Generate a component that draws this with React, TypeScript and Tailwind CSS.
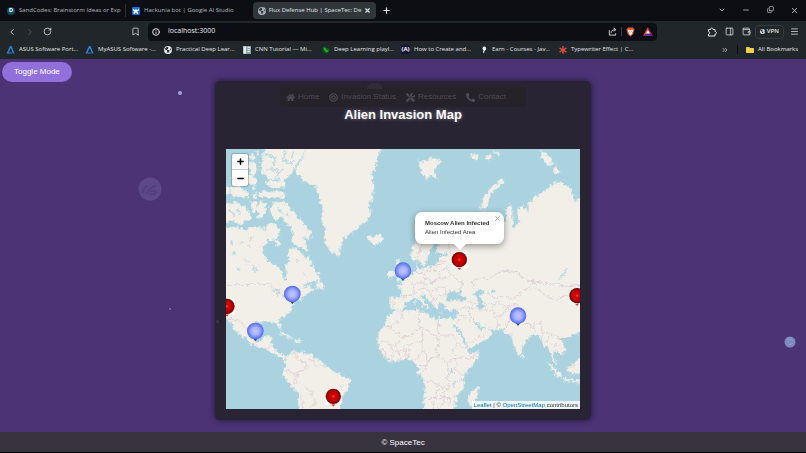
import { useState } from "react";
import { FaHome, FaBullseye, FaTools, FaPhone, FaAsterisk, FaFolder } from "react-icons/fa";
import { FaEarthAmericas } from "react-icons/fa6";
import {
  Bookmark,
  ChevronDown,
  ChevronLeft,
  ChevronRight,
  ChevronsRight,
  Copy,
  Info,
  Menu,
  Minus,
  PanelRight,
  Plus,
  RotateCw,
  Wallet,
  X,
} from "lucide-react";

const AsusIcon = () => (
  <svg viewBox="0 0 18 18" className="size-[9px] shrink-0">
    <path d="M1 17 8 2h3l6 15h-3L9.500 6 5 15h6l2 2z" fill="#2f86e0" />
  </svg>
);

const NotebookIcon = () => (
  <svg viewBox="0 0 16 16" className="size-[8px] shrink-0">
    <rect width="16" height="16" fill="#8fa3a8" />
    <path d="M1 1h5v14H1zM9 2h5v2H9zM9 6h5v2H9zM9 10h5v2H9z" fill="#e6eef0" />
  </svg>
);

const LeafIcon = () => (
  <svg viewBox="0 0 16 16" className="size-[8px] shrink-0">
    <path d="M1 3 6 1l4 3 5 2-1 6-5 3-5-2-3-5z" fill="#0d5a1a" />
    <path d="m2 3 5 1 2 4 4 1-3 4-4-3z" fill="#21b52f" />
  </svg>
);

const BracketIcon = () => (
  <span className="flex size-[9px] shrink-0 items-center justify-center bg-[#15133a] text-[6px] font-bold text-white">
    (A)
  </span>
);

const EarnIcon = () => (
  <svg viewBox="0 0 16 16" className="size-[8px] shrink-0">
    <path d="M8 1c4 0 5 3 4 6l-3 3-1 5-2-3 1-3-2-3c0-3 1-5 3-5z" fill="#e8f0ff" />
  </svg>
);

const ShareIcon = () => (
  <svg viewBox="0 0 20 20" className="size-[9px]" fill="none" stroke="currentColor" strokeWidth="2">
    <path d="M3 7v11h14v-4M7 13c0-5 3-7 10-7M13 2l4 4-4 4" />
  </svg>
);

const PuzzleIcon = () => (
  <svg viewBox="0 0 20 20" className="size-[10px]" fill="none" stroke="currentColor" strokeWidth="2">
    <path d="M3 5h4c0-4 5-4 5 0h4v4c4 0 4 5 0 5v4H3v-4c3 0 3-5 0-5z" />
  </svg>
);

const BraveIcon = () => (
  <svg viewBox="0 0 20 22" className="h-[10px] w-[9px]">
    <path d="m5 1 10 0 4 4-1 3-2 8-6 5-6-5-2-8-1-3z" fill="#f1562b" />
    <path d="m5 6 5 1 5-1 1 3-3 4 1 2-4 3-4-3 1-2-3-4z" fill="#fff" />
    <path d="m7 9 2 1v3zM13 9l-2 1v3z" fill="#f1562b" />
  </svg>
);

const TriangleIcon = () => (
  <svg viewBox="0 0 20 18" className="h-[9px] w-[10px]">
    <path d="M10 0 0 18l10-6z" fill="#ff4724" />
    <path d="M10 0l10 18-10-6z" fill="#9e1f63" />
    <path d="M0 18h20l-10-6z" fill="#662d91" />
    <path d="m10 6 4 7H6z" fill="#fff" />
  </svg>
);

const bookmarks = [
  { label: "ASUS Software Port...", icon: <AsusIcon /> },
  { label: "MyASUS Software -...", icon: <AsusIcon /> },
  { label: "Practical Deep Lear...", icon: <FaEarthAmericas className="size-[8px] shrink-0" /> },
  { label: "CNN Tutorial — Mi...", icon: <NotebookIcon /> },
  { label: "Deep Learning playl...", icon: <LeafIcon /> },
  { label: "How to Create and...", icon: <BracketIcon /> },
  { label: "Earn - Courses - Jav...", icon: <EarnIcon /> },
  { label: "Typewriter Effect | C...", icon: <FaAsterisk className="size-[8px] shrink-0 text-[#e8503f]" /> },
];

const navLinks = [
  { label: "Home", icon: <FaHome className="size-[9px]" /> },
  { label: "Invasion Status", icon: <FaBullseye className="size-[9px]" /> },
  { label: "Resources", icon: <FaTools className="size-[9px]" /> },
  { label: "Contact", icon: <FaPhone className="size-[9px] -scale-x-100" /> },
];

const safeZones = [
  [199, 435],
  [88, 546],
  [531, 365],
  [876, 500],
];

const infectedZones = [
  [3, 472],
  [700, 332],
  [1053, 440],
  [322, 742],
];

const BrowserBar = () => (
  <header className="bg-[#20262a] font-['Open_Sans',sans-serif] text-[6px] text-[#e3e7e9]">
    <div className="flex h-[21px] items-center bg-[#0d0e13]">
      <div className="flex h-[13px] w-[126px] items-center gap-1 border-r border-[#2a2d33] pl-[7px] text-[#b4b8bc]">
        <span className="flex size-[8px] shrink-0 items-center justify-center rounded-full bg-[#0f4d63] font-bold text-white">
          D
        </span>
        <span className="whitespace-nowrap">SandCodes: Brainstorm Ideas or Exp</span>
      </div>
      <div className="flex h-[13px] w-[127px] items-center gap-1 pl-1.5 text-[#b4b8bc]">
        <svg viewBox="0 0 16 16" className="size-[8px] shrink-0">
          <rect width="16" height="16" rx="2" fill="#1769e8" />
          <path d="m2 3 4 3 2-2 2 2 4-3-1 5-3 1 3 4-3 1-2-4-3 4-3-2 3-3-3-2z" fill="#fff" />
        </svg>
        <span className="whitespace-nowrap">Hackunia bot | Google AI Studio</span>
      </div>
      <div className="flex h-[17px] w-[123px] items-center justify-between rounded-[4px] bg-[#30373b] px-[5px]">
        <FaEarthAmericas className="size-[8px] shrink-0 text-[#a9b0b4]" />
        <span className="whitespace-nowrap">Flux Defense Hub | SpaceTec: De</span>
        <button aria-label="Close tab">
          <X className="size-[7px]" strokeWidth={4} />
        </button>
      </div>
      <button aria-label="New tab" className="ml-1.5">
        <Plus className="size-[9px]" strokeWidth={3} />
      </button>
      <div className="ml-auto flex">
        <button aria-label="Search tabs" className="flex w-6 justify-center">
          <ChevronDown className="size-[8px]" />
        </button>
        <button aria-label="Minimize" className="flex w-6 justify-center">
          <Minus className="size-[8px]" />
        </button>
        <button aria-label="Restore" className="flex w-6 justify-center">
          <Copy className="size-[7px] -scale-y-100" />
        </button>
        <button aria-label="Close" className="flex w-6 justify-center">
          <X className="size-[9px]" />
        </button>
      </div>
    </div>

    <div className="flex h-[21px] items-center">
      <div className="flex w-[148px] items-center gap-2 pr-2 pl-[7px]">
        <button aria-label="Back">
          <ChevronLeft className="size-[10px]" />
        </button>
        <button aria-label="Forward">
          <ChevronRight className="size-[10px] text-[#5b6166]" />
        </button>
        <button aria-label="Reload">
          <RotateCw className="size-[9px]" />
        </button>
        <button aria-label="Bookmark" className="ml-auto">
          <Bookmark className="size-[9px]" />
        </button>
      </div>
      <div className="flex h-[18px] flex-1 items-center gap-2 rounded-[4px] bg-[#0d0e13] px-1">
        <Info className="size-[8px]" strokeWidth={3} />
        <input
          aria-label="Address"
          defaultValue="localhost:3000"
          className="min-w-0 flex-1 bg-transparent text-[7px] text-[#e8eaec] outline-none"
        />
        <button aria-label="Share" className="border-r border-[#3b4045] pr-1">
          <ShareIcon />
        </button>
        <button aria-label="Shields" className="-ml-1">
          <BraveIcon />
        </button>
        <button aria-label="Rewards">
          <TriangleIcon />
        </button>
      </div>
      <div className="flex w-[149px] items-center justify-end gap-2 pr-[7px]">
        <button aria-label="Extensions">
          <PuzzleIcon />
        </button>
        <button aria-label="Sidebar">
          <PanelRight className="size-[9px]" />
        </button>
        <button aria-label="Wallet">
          <Wallet className="size-[9px]" />
        </button>
        <button className="-ml-1 flex h-[14px] items-center gap-0.5 rounded-[4px] border border-[#343a3f] px-1 font-semibold">
          <FaEarthAmericas className="size-[5px]" />
          VPN
        </button>
        <button aria-label="Menu" className="-ml-0.5">
          <Menu className="size-[9px]" />
        </button>
      </div>
    </div>

    <div className="flex h-[17px] items-center pr-2 pl-1.5 pb-0.5">
      {bookmarks.map((b) => (
        <a key={b.label} href="#" className="flex w-[79px] items-center gap-1 whitespace-nowrap">
          {b.icon}
          {b.label}
        </a>
      ))}
      <button aria-label="More bookmarks" className="ml-auto pr-2">
        <ChevronsRight className="size-[8px]" />
      </button>
      <a href="#" className="flex items-center gap-1 border-l border-[#0d0e13] pl-2 whitespace-nowrap">
        <FaFolder className="size-[8px] text-[#f4cf4d]" />
        All Bookmarks
      </a>
    </div>
  </header>
);

const WorldMap = () => (
  <svg viewBox="0 0 1062 780" preserveAspectRatio="xMidYMid slice" className="block size-full">
    <defs>
      <filter
        id="coast"
        x="0"
        y="0"
        width="1062"
        height="780"
        filterUnits="userSpaceOnUse"
        colorInterpolationFilters="sRGB"
      >
        <feTurbulence type="fractalNoise" baseFrequency="0.09" numOctaves="3" seed="4" />
        <feDisplacementMap in="SourceGraphic" scale="20" xChannelSelector="R" yChannelSelector="G" />
      </filter>
      <radialGradient id="safe">
        <stop offset="0" stopColor="#c3caff" />
        <stop offset="0.5" stopColor="#a3afff" />
        <stop offset="1" stopColor="#4f66ee" />
      </radialGradient>
      <radialGradient id="infected">
        <stop offset="0" stopColor="#ff4a4a" />
        <stop offset="0.2" stopColor="#d80808" />
        <stop offset="0.7" stopColor="#b50000" />
        <stop offset="1" stopColor="#6d0000" />
      </radialGradient>
    </defs>
    <rect width="1062" height="780" fill="#aad3df" />

    <g filter="url(#coast)">
      <rect x="-20" y="-20" width="1102" height="820" fill="#aad3df" />
      {/* Americas */}
      <g fill="#f2efe9">
        <path d="M-20 236 30 234 60 240 88 232 118 236 135 220 145 225 152 235 165 240 158 256 150 270 125 276 112 292 110 316 125 335 150 350 168 362 172 386 180 390 182 368 178 350 190 338 186 310 195 298 210 296 228 312 240 328 250 320 258 350 275 372 285 388 272 396 240 402 228 418 248 408 258 414 262 424 252 432 230 440 226 452 202 462 199 478 182 498 157 513 167 538 164 545 152 523 127 518 97 518 77 533 72 558 87 578 107 576 112 564 128 562 137 566 137 588 157 608 182 625 202 606 217 611 257 615 267 628 297 643 312 663 347 678 375 691 367 718 352 738 347 763 330 800 217 800 217 733 192 708 169 678 177 658 180 632 147 618 117 598 77 588 62 568 42 558 27 543 12 518 -20 490Z" />
        <path d="M242-20 232 23 207 63 212 78 230 80 222 92 240 100 267 108 282 148 292 188 285 213 297 238 295 273 307 298 322 313 337 321 345 298 352 268 377 253 397 233 427 213 435 193 429 168 442 138 445 108 437 78 452 48 457 18 478-20Z" />
        <path d="M427 262 433 256 438 266 447 260 465 257 471 274 447 289 430 280Z" />
        <path d="M270 403 282 388 284 398 295 408 292 422 270 418Z" />
        <path d="M155 555 172 552 192 562 205 571 190 568ZM203 575 222 572 232 577 208 580Z" />
        {/* Arctic islands */}
        <path d="M115-20 242-20 230 22 212 45 202 66 185 84 172 98 152 88 132 92 110 74 100 50 110 30Z" />
        <path d="M120 98 145 94 178 98 180 112 150 116 125 112ZM98 128 125 124 140 130 176 126 176 146 130 148 100 144Z" />
        <path d="M132 172 150 158 178 162 195 180 210 196 232 222 256 252 250 274 230 260 243 288 242 306 222 296 196 278 202 250 188 230 165 202 150 214 136 200Z" />
        <path d="M-20 153 14 166 26 158 45 170 60 172 70 192 76 212 56 218 44 230 20 216-20 222Z" />
        <path d="M-20 108 12 116 12 134-20 142ZM14 116 40 110 54 124 68 128 68 146 36 142 16 146ZM70 42 88 38 96 62 82 80 68 64ZM58 84 76 76 96 92 90 108 64 104ZM74 156 94 160 97 184 78 192ZM102 156 124 162 114 198 98 210 94 182ZM66 24 78 14 90 28 76 34ZM32 92 54 96 48 110 34 106ZM88 6 98 2 96 22ZM146 272 162 278 160 292 148 290ZM80 110 92 114 84 124ZM40 70 52 74 46 86ZM14 84 24 88 18 98ZM82 132 92 136 88 148 78 144Z" />
      </g>
      {/* Europe, Africa and Asia */}
      <g transform="translate(432 258)" fill="#f2efe9">
        <path d="M125 45 122 65 130 78 142 74 140 92 136 112 118 118 108 132 92 140 92 148 78 150 95 168 93 187 62 185 60 220 74 227 55 245 45 265 28 295 22 315 25 335 45 368 65 380 90 378 115 370 135 385 145 400 143 415 162 435 165 470 160 500 168 542 245 542 258 500 260 485 282 460 280 425 300 400 320 375 328 348 298 354 288 335 270 302 248 268 256 268 275 295 290 325 296 342 330 325 350 315 368 295 355 283 350 276 335 290 322 275 312 258 320 260 335 276 350 278 375 285 398 283 410 300 422 296 430 330 447 364 455 350 460 325 480 305 498 297 515 315 522 340 530 332 540 350 548 375 562 392 552 360 556 342 570 360 587 345 580 325 570 312 590 308 610 300 650 284 650-105 610-105 605-140 580-155 560-160 545-150 520-130 490-110 470-90 478-66 455-90 440-70 447-35 435-20 425-30 432-60 425-90 410-85 405-40 380-25 300-30 180-50 150-10Z" />
        <path d="M78 75 90 68 88 85 100 100 112 122 105 133 78 137 90 120 80 100ZM55 112 66 104 73 110 70 126 55 130ZM300 475 322 455 325 470 310 515 300 518 296 500ZM457 354 465 366 461 374 456 368ZM527 375 545 390 572 416 576 430 560 424ZM575 430 600 433 650 440 648 446 578 437ZM588 400 612 384 625 368 650 370 640 410 602 418Z" />
        <path d="M332-78 342-117 362-142 397-167 405-157 372-137 357-107 349-75ZM145-228 162-218 182-232 217-222 202-208 192-196 202-167 182-182 170-164 155-188ZM302-238 322-242 330-230 310-228ZM345-232 362-244 368-230 350-225ZM370-250 390-248 388-236ZM516-255 530-242 545-228 546-210 530-206 524-222 512-230ZM556-212 572-186 548-184Z" />
        <g fill="#aad3df">
          <path d="M72 227 98 223 108 203 124 196 142 188 150 200 168 212 172 224 178 220 172 206 158 192 150 180 158 176 172 194 188 208 196 225 208 226 205 210 216 202 222 212 225 225 245 228 262 226 258 250 240 250 215 247 205 256 180 245 172 235 150 228 148 222 100 227Z" />
          <path d="M228 190 236 172 250 168 258 174 270 168 276 172 268 178 290 190 285 200 255 194 232 200Z" />
          <path d="M312 172 330 164 342 172 330 184 342 202 340 222 326 222 324 202ZM363 166 374 164 372 178ZM240 403 251 400 248 411 240 410Z" />
          <path d="M196 15 206 25 198 45 202 56 236 54 236 60 210 64 206 78 194 90 175 98 150 102 142 98 143 76 148 74 158 94 168 88 170 70 180 58 184 38Z" />
        </g>
        <path d="M134 196 138 194 138 210 133 208ZM136 186 139 184 138 192ZM152 214 164 214 162 220ZM205 232 220 232 208 234ZM240 229 250 228 244 232Z" />
        <path d="M567 132 579 120 590 100M255 435 250 460M250 404 232 425" fill="none" stroke="#aad3df" strokeWidth="4" />
      </g>
      {/* Inland water and fjords */}
      <path
        d="M40 284 52 278M70 262 78 270M20 310 30 318M56 330 66 340M84 350 90 372M14 276 20 284M108 238 120 250M212 330 218 340M230 370 240 376M144 424 164 418M152 444 160 424M172 438 184 446M64 290 70 296M116 14 150 30 140 50M180 10 170 30 190 44 204 40M206 4 196 28M120 60 150 62 158 72M150 84 168 60M32 182 44 194M180 196 188 204M36 356 42 364M800 210 806 220M862 190 856 210M10 184 24 200M156 176 168 190"
        fill="none"
        stroke="#aad3df"
        strokeWidth="4"
      />
      {/* Borders */}
      <g fill="none" stroke="#cdb4c4" strokeWidth="2" opacity="0.75">
        <path d="M0 406H130L150 424 180 440 210 424 228 430M6 512 40 512 60 540 72 548M88 588 104 574M118 598 134 590M150 608 160 604M206 606 214 634 240 640 238 662 216 668 210 680 186 664 174 666M240 640 262 630 270 652 290 650 306 652M216 668 210 700 232 708 256 730 262 750 270 762 250 780M186 714 208 702M220 734 230 752 228 780M240 646 250 660" />
        <g transform="translate(432 258)">
          <path d="M140 70 152 40 165 0M205 20 210-20M240 58 235 30 245-10M136 112 160 112 165 130 150 142 130 148 112 134M165 112 195 105 205 108 208 130 190 140 165 130M130 148 130 165 142 175 120 180 96 188M150 142 170 150 190 142 205 152 200 166 178 168 165 158 145 165M205 78 225 80 232 100 208 108M232 100 250 128 278 142 276 156 262 166M208 130 240 125M205 152 225 160 232 175M200 166 210 182 232 182M178 168 186 190 206 190M186 190 192 204M196 92 215 88M62 196 72 198 70 220" />
          <path d="M312 160 306 140 330 128 360 134 375 118 405 106 440 110 458 130 490 140 478 158 455 170 440 185 420 190 400 182 375 190 350 172 342 178M490 140 520 145 560 148 600 155 630 150M490 140 500 160 530 185 560 192 600 178M342 205 370 210 385 200 400 214 420 212 440 206M370 210 372 245 385 262 378 282M372 245 400 240 412 218M412 218 430 230 408 270 410 284M440 206 445 250 470 268 500 270 512 262 520 290 515 315M470 268 488 276 498 290M530 320 545 300 560 306 580 316M545 330 560 330 575 340M530 290 545 300M260 226 275 222 300 215 310 220M285 190 300 200 318 205M300 215 295 235 312 256M262 240 275 240 295 252 312 262M258 262 275 250M296 325 318 312 340 304 345 290M318 222 340 226 360 226" />
          <path d="M92 232 98 250 62 275 48 275M62 275 62 282 100 308 75 330 60 330 46 318 28 318M146 228 145 260 150 280 125 300 100 308M205 256 205 300 250 300M150 280 160 280 200 305 205 320 198 345 205 365M160 280 155 320 135 325 110 328 100 345 75 350 65 340 60 330M155 320 160 345 145 365 130 375M250 300 262 322 285 340M262 322 248 345 255 368 290 370 310 368 325 350M205 365 230 382 255 368M205 365 175 375 160 345M175 375 170 395 150 420M150 392 170 395M162 435 185 438 200 450 215 455 238 465M230 382 235 400 230 420 238 445 232 465 220 475M255 368 262 390 255 402 278 420M255 440 282 435M215 455 195 478 200 490 165 490M195 478 190 522M200 490 225 485 240 490 260 485M225 485 215 510 205 522M240 490 235 515M45 368 50 348 30 342M65 380 68 352M90 378 88 350M105 372 104 345M115 370 118 335M585 402 605 398 620 385" />
        </g>
      </g>
    </g>

    {safeZones.map(([x, y]) => (
      <g key={`${x}-${y}`}>
        <path d={`M${x - 7} ${y + 22}h14l-7 9z`} fill="#284c78" />
        <circle cx={x} cy={y} r="25" fill="url(#safe)" />
      </g>
    ))}
    {infectedZones.map(([x, y]) => (
      <g key={`${x}-${y}`}>
        <path d={`M${x - 24} ${y + 4}h48v22h-48zM${x + 8} ${y - 24}h16v20h-16z`} fill="#fff" />
        <path d={`M${x - 6} ${y + 24}h12l-6 7z`} fill="#f03535" />
        <circle cx={x} cy={y} r="23" fill="url(#infected)" />
      </g>
    ))}
  </svg>
);

const Popup = ({ onClose }: { onClose: () => void }) => (
  <div className="absolute top-[63px] left-[189px] w-[89px] rounded-[7px] bg-white py-[7px] pl-2.5 text-[6px] leading-[9px] text-[#333] shadow-[0_2px_7px_rgba(0,0,0,0.4)]">
    <p className="font-bold whitespace-nowrap">Moscow Alien Infected</p>
    <p>Alien Infected Area</p>
    <button aria-label="Close popup" onClick={onClose} className="absolute top-[3px] right-[3px] flex text-[#9a9a9a]">
      <X className="size-[7px]" strokeWidth={3} />
    </button>
    <svg viewBox="0 0 12 6" className="absolute top-full left-[39px] h-[6px] w-[12px]">
      <path d="M0 0h12L6 6z" fill="#fff" />
    </svg>
  </div>
);

const Planets = () => (
  <div className="pointer-events-none absolute inset-0">
    <span className="absolute top-[32px] left-[178px] size-[4px] rounded-full bg-[#aaa2d6]" />
    <svg viewBox="0 0 24 24" className="absolute top-[118px] left-[138px] size-[24px]">
      <circle cx="12" cy="12" r="11.500" fill="#5d4988" />
      <path
        d="M5 16c0-4 2-7 5-7M9 17c1-4 3-7 9-8M12 14h6M12 17c3 1 5 0 7-2"
        fill="none"
        stroke="#553f81"
        strokeWidth="2"
      />
    </svg>
    <span className="absolute top-[249px] left-[169px] size-[2px] rounded-full bg-[#8475b0]" />
    <svg viewBox="0 0 12 12" className="absolute top-[277px] right-[10px] size-[12px]">
      <circle cx="6" cy="6" r="5.500" fill="#8089bd" />
      <path d="M3 4c2-2 5-1 6 1M4 8c2 1 4 0 5-1" fill="none" stroke="#949fcb" />
    </svg>
  </div>
);

const App = () => {
  const [dark, setDark] = useState(true);
  const [popupOpen, setPopupOpen] = useState(true);

  return (
    <div className="flex min-h-screen flex-col bg-black font-['Liberation_Sans',Arial,sans-serif]">
      <BrowserBar />

      <main
        className={`relative grid flex-1 grid-cols-[1fr_376px_1fr] items-start pt-[3px] pb-3 ${
          dark ? "bg-[#4b3376]" : "bg-[#8f7bc0]"
        }`}
      >
        <Planets />
        <div className="relative flex pl-0.5">
          <button onClick={() => setDark(!dark)} className="h-5 rounded-full bg-[#9270db] px-3 text-[8px] text-white">
            Toggle Mode
          </button>
        </div>

        <section className="relative mt-[19px] rounded-[5px] bg-[#292434] px-[11px] pt-1.5 pb-[11px] shadow-[0_0_6px_rgba(0,0,0,0.6)]">
          <span className="absolute top-[2px] left-[152px] h-[6px] w-[16px] rounded-t-full bg-[#302b39]" />
          <span className="absolute top-[239px] left-[1px] size-[3px] rounded-full bg-[#3d3848]" />
          <nav className="mx-auto flex h-5 w-[246px] items-center gap-2.5 rounded-[4px] bg-[#262229] pl-1.5 text-[8px] text-[#504c57]">
            {navLinks.map((link) => (
              <a key={link.label} href="#" className="flex items-center gap-[3px] whitespace-nowrap">
                {link.icon}
                {link.label}
              </a>
            ))}
          </nav>
          <h1 className="mb-[26px] text-center text-[13px] leading-4 font-bold text-white [text-shadow:0_0_4px_rgba(255,255,255,0.4)]">
            Alien Invasion Map
          </h1>

          <div className="relative h-[260px] overflow-hidden">
            <WorldMap />
            <div className="absolute top-[5px] left-1.5 flex w-4 flex-col divide-y divide-[#ccc] overflow-hidden rounded-[2px] bg-white text-black shadow-[0_0_1px_1px_rgba(0,0,0,0.2)]">
              <button aria-label="Zoom in" className="flex h-4 items-center justify-center">
                <Plus className="size-[9px]" strokeWidth={4} />
              </button>
              <button aria-label="Zoom out" className="flex h-4 items-center justify-center">
                <Minus className="size-[9px]" strokeWidth={4} />
              </button>
            </div>
            {popupOpen && <Popup onClose={() => setPopupOpen(false)} />}
            <p className="absolute right-0 bottom-0 bg-white/80 px-0.5 text-[6px] leading-[8px] text-[#333]">
              <a href="#" className="text-[#0078a8]">
                Leaflet
              </a>{" "}
              | ©{" "}
              <a href="#" className="text-[#0078a8]">
                OpenStreetMap
              </a>{" "}
              contributors
            </p>
          </div>
        </section>
      </main>

      <footer className="mb-px bg-[#38333f] pt-[5px] pb-[3px] text-center text-[8px] leading-3 text-white">
        © SpaceTec
      </footer>
    </div>
  );
};

export default App;
